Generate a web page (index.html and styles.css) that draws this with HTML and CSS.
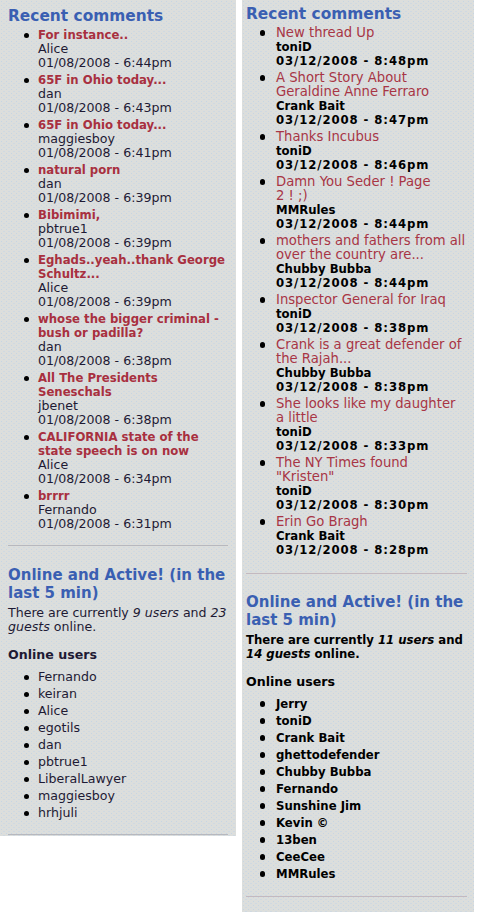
FILE: index.html
```html
<!DOCTYPE html>
<html>
<head>
<meta charset="utf-8">
<title>Recent comments</title>
<link rel="stylesheet" href="styles.css">
</head>
<body>
<div class="page">
  <div class="panel panel-left">
    <section class="block block-comments">
      <h2 class="block-title">Recent comments</h2>
      <ul class="comments">
        <li><a href="#">For instance..</a><div class="author">Alice</div><div class="date">01/08/2008 - 6:44pm</div></li>
        <li><a href="#">65F in Ohio today...</a><div class="author">dan</div><div class="date">01/08/2008 - 6:43pm</div></li>
        <li><a href="#">65F in Ohio today...</a><div class="author">maggiesboy</div><div class="date">01/08/2008 - 6:41pm</div></li>
        <li><a href="#">natural porn</a><div class="author">dan</div><div class="date">01/08/2008 - 6:39pm</div></li>
        <li><a href="#">Bibimimi,</a><div class="author">pbtrue1</div><div class="date">01/08/2008 - 6:39pm</div></li>
        <li><a href="#">Eghads..yeah..thank George Schultz...</a><div class="author">Alice</div><div class="date">01/08/2008 - 6:39pm</div></li>
        <li><a href="#">whose the bigger criminal - bush or padilla?</a><div class="author">dan</div><div class="date">01/08/2008 - 6:38pm</div></li>
        <li><a href="#">All The Presidents Seneschals</a><div class="author">jbenet</div><div class="date">01/08/2008 - 6:38pm</div></li>
        <li><a href="#">CALIFORNIA state of the state speech is on now</a><div class="author">Alice</div><div class="date">01/08/2008 - 6:34pm</div></li>
        <li><a href="#">brrrr</a><div class="author">Fernando</div><div class="date">01/08/2008 - 6:31pm</div></li>
      </ul>
    </section>
    <section class="block block-online">
      <h2 class="block-title online-title">Online and Active! (in the last 5 min)</h2>
      <p class="count">There are currently <em>9 users</em> and <em>23 guests</em> online.</p>
      <h3 class="users-title">Online users</h3>
      <ul class="users">
        <li>Fernando</li>
        <li>keiran</li>
        <li>Alice</li>
        <li>egotils</li>
        <li>dan</li>
        <li>pbtrue1</li>
        <li>LiberalLawyer</li>
        <li>maggiesboy</li>
        <li>hrhjuli</li>
      </ul>
    </section>
  </div>

  <div class="panel panel-right">
    <section class="block block-comments">
      <h2 class="block-title">Recent comments</h2>
      <ul class="comments">
        <li><a href="#">New thread Up</a><div class="author">toniD</div><div class="date">03/12/2008 - 8:48pm</div></li>
        <li><a href="#">A Short Story About Geraldine Anne Ferraro</a><div class="author">Crank Bait</div><div class="date">03/12/2008 - 8:47pm</div></li>
        <li><a href="#">Thanks Incubus</a><div class="author">toniD</div><div class="date">03/12/2008 - 8:46pm</div></li>
        <li><a href="#">Damn You Seder ! Page<br>2 ! ;)</a><div class="author">MMRules</div><div class="date">03/12/2008 - 8:44pm</div></li>
        <li><a href="#">mothers and fathers from all over the country are...</a><div class="author">Chubby Bubba</div><div class="date">03/12/2008 - 8:44pm</div></li>
        <li><a href="#">Inspector General for Iraq</a><div class="author">toniD</div><div class="date">03/12/2008 - 8:38pm</div></li>
        <li><a href="#">Crank is a great defender of the Rajah...</a><div class="author">Chubby Bubba</div><div class="date">03/12/2008 - 8:38pm</div></li>
        <li><a href="#">She looks like my daughter a little</a><div class="author">toniD</div><div class="date">03/12/2008 - 8:33pm</div></li>
        <li><a href="#">The NY Times found "Kristen"</a><div class="author">toniD</div><div class="date">03/12/2008 - 8:30pm</div></li>
        <li><a href="#">Erin Go Bragh</a><div class="author">Crank Bait</div><div class="date">03/12/2008 - 8:28pm</div></li>
      </ul>
    </section>
    <section class="block block-online">
      <h2 class="block-title online-title">Online and Active! (in the last 5 min)</h2>
      <p class="count">There are currently <em>11 users</em> and <em>14 guests</em> online.</p>
      <h3 class="users-title">Online users</h3>
      <ul class="users">
        <li>Jerry</li>
        <li>toniD</li>
        <li>Crank Bait</li>
        <li>ghettodefender</li>
        <li>Chubby Bubba</li>
        <li>Fernando</li>
        <li>Sunshine Jim</li>
        <li>Kevin ©</li>
        <li>13ben</li>
        <li>CeeCee</li>
        <li>MMRules</li>
      </ul>
    </section>
  </div>
</div>
</body>
</html>
```

FILE: styles.css
```css
html, body {
  margin: 0;
  padding: 0;
  background: #ffffff;
}

body {
  font-family: "DejaVu Sans", Verdana, sans-serif;
}

.page {
  display: flex;
  align-items: flex-start;
  gap: 6px;
}

.panel {
  box-sizing: border-box;
  background-color: #dcdedc;
  background-image:
    radial-gradient(circle at 1.5px 1.5px, #c6d5e4 0.55px, rgba(220, 222, 220, 0) 0.95px),
    radial-gradient(circle at 4px 3.5px, #cfd9e2 0.5px, rgba(220, 222, 220, 0) 0.9px);
  background-size: 5px 4px, 5px 4px;
}

.panel-left {
  width: 236px;
  padding: 7px 8px 1px 8px;
  color: #1e1a34;
}

.panel-right {
  width: 232px;
  padding: 5px 7px 15px 4px;
  color: #000000;
}

.block {
  border-bottom: 1px solid #b7b8be;
}

.panel-right .block {
  border-bottom-color: #c3b9c0;
}

.block-comments {
  padding-bottom: 14px;
}

.block-online {
  padding-top: 20px;
  padding-bottom: 14px;
}

.panel-right .block-comments {
  padding-bottom: 16px;
}

.panel-right .block-online {
  padding-top: 19px;
  padding-bottom: 15px;
}

.block-title {
  margin: 0;
  font-size: 15.4px;
  line-height: 18px;
  font-weight: bold;
  color: #3a5fb2;
}

.online-title {
  font-size: 15px;
}

.comments,
.users {
  margin: 3px 0 0 0;
  padding: 0 0 0 30px;
  list-style: none;
}

.users {
  margin-top: 8px;
}

.comments li,
.users li {
  line-height: 14px;
  margin-bottom: 3px;
}

.comments li::before,
.users li::before {
  content: "";
  float: left;
  width: 5px;
  height: 5px;
  border-radius: 50%;
  background: #000000;
  margin: 4.5px 0 0 -14.5px;
}

.panel-right .comments li::before,
.panel-right .users li::before {
  width: 5.4px;
  height: 5.4px;
  margin: 4.3px 0 0 -16px;
}

.comments li:last-child,
.users li:last-child {
  margin-bottom: 0;
}

.comments a {
  display: block;
  text-decoration: none;
  color: #a8303f;
  line-height: 14px;
}

.author,
.date {
  line-height: 14px;
}

.count {
  margin: 4px 0 0 0;
  line-height: 14px;
}

.users-title {
  margin: 14px 0 0 0;
  font-size: 12.6px;
  line-height: 14px;
  font-weight: bold;
}

/* left panel typography */
.panel-left .comments li,
.panel-left .users li,
.panel-left .count {
  font-size: 12.6px;
}

.panel-left .comments a {
  font-size: 11.7px;
  font-weight: bold;
}

/* right panel typography */
.panel-right .comments li,
.panel-right .users li {
  font-size: 13px;
}

.panel-right .comments a {
  font-size: 13.2px;
  font-weight: normal;
  color: #a83545;
}

.panel-right .author,
.panel-right .users li,
.panel-right .count {
  font-size: 11.7px;
  font-weight: bold;
}

.panel-right .date {
  font-size: 11.7px;
  font-weight: bold;
  letter-spacing: 0.9px;
}
```
